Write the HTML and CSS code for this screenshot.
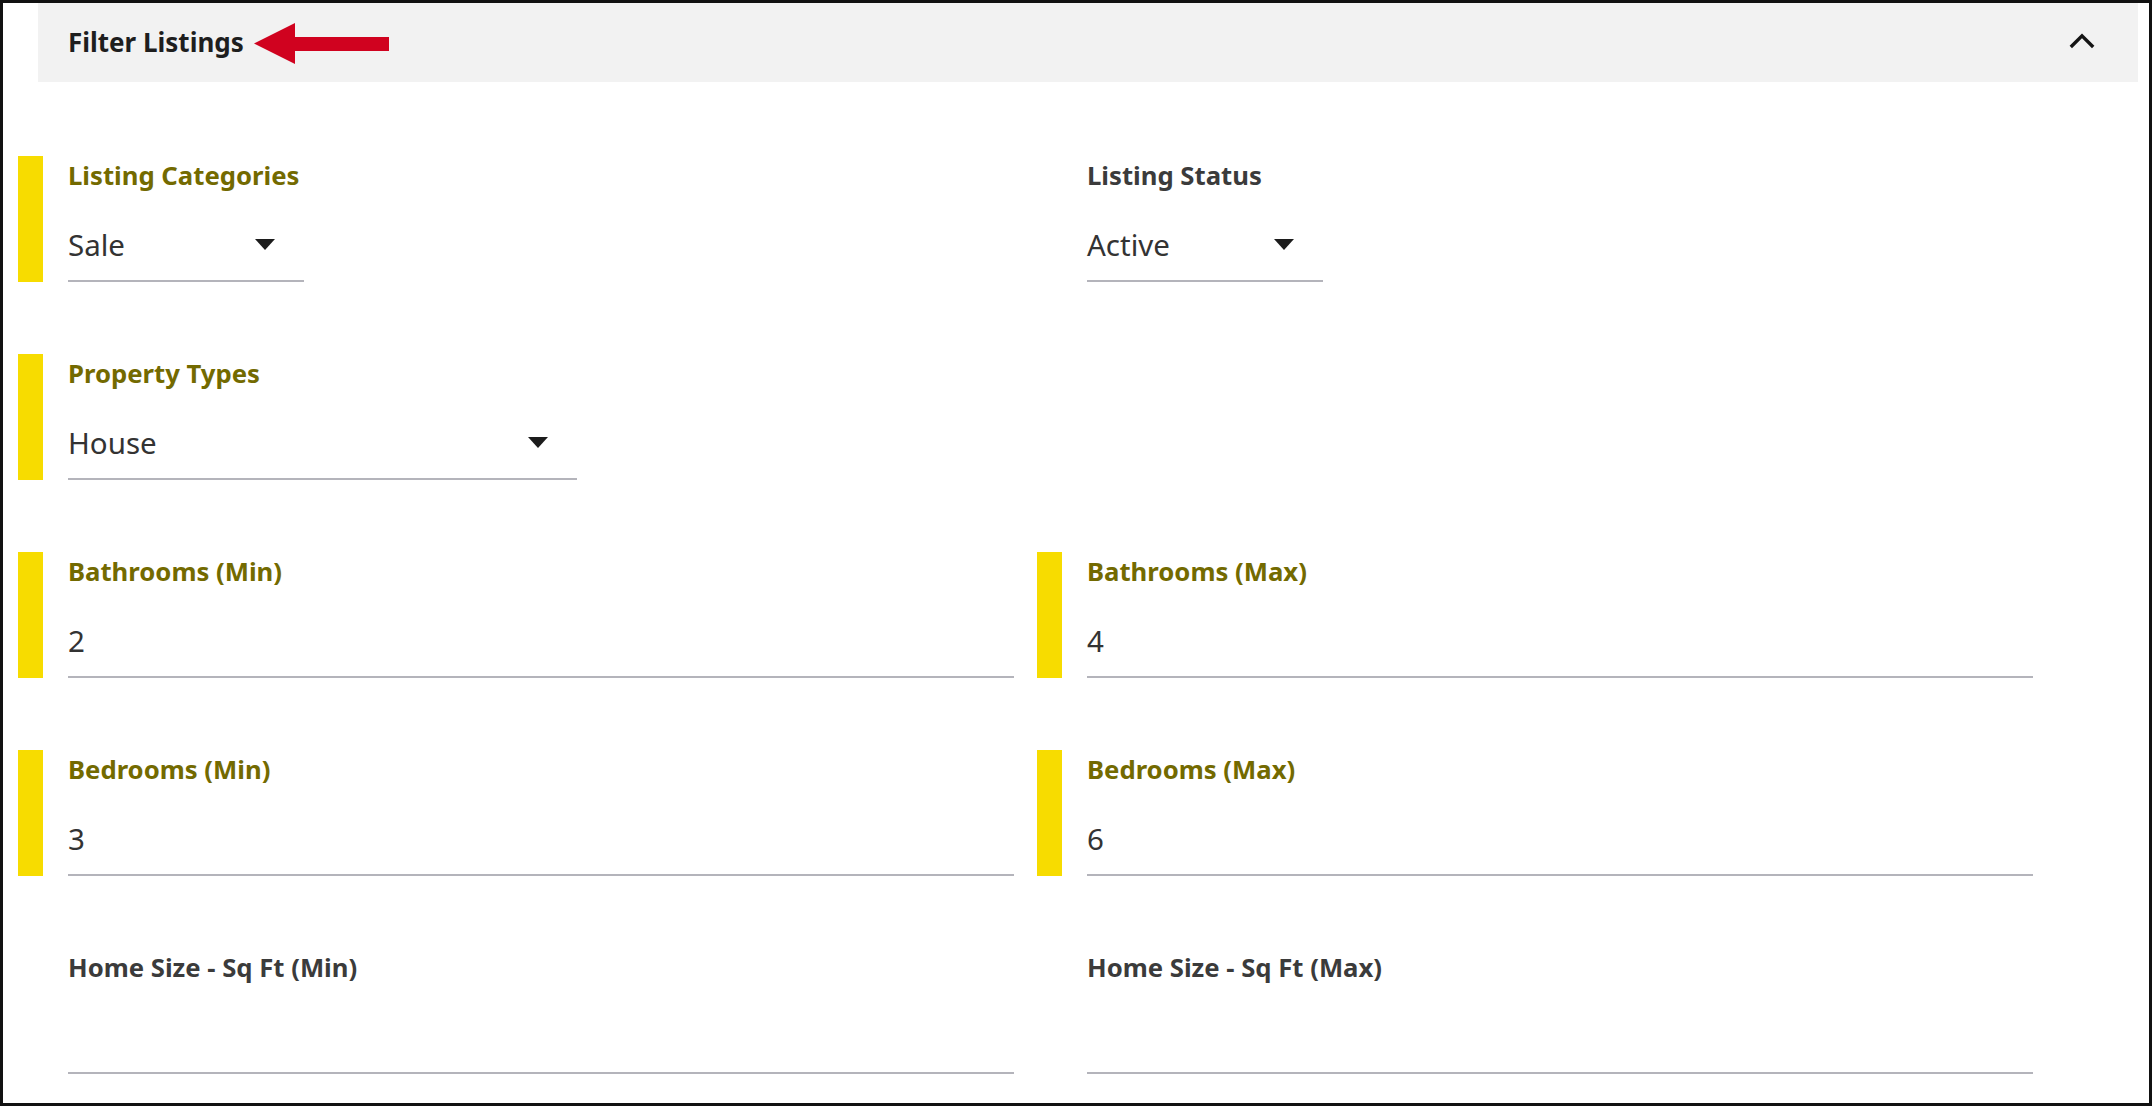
FILE: index.html
```html
<!DOCTYPE html>
<html lang="en">
<head>
<meta charset="utf-8">
<title>Filter Listings</title>
<link rel="stylesheet" href="styles.css">
</head>
<body>
<section class="panel">
  <header class="panel-header">
    <h2 class="panel-title">Filter Listings</h2>
    <svg class="pointer" width="135" height="41" viewBox="0 0 135 41" aria-hidden="true">
      <polygon points="0,20.5 41,0 41,14 135,14 135,28 41,28 41,41" fill="#d0021f"/>
    </svg>
    <button class="toggle" type="button" aria-label="Collapse">
      <svg width="26" height="16" viewBox="0 0 26 16" aria-hidden="true">
        <polyline points="1.8,14 13,2.8 24.2,14" fill="none" stroke="#151515" stroke-width="3.4" stroke-linejoin="miter"/>
      </svg>
    </button>
  </header>

  <div class="filters">
    <div class="field is-set">
      <span class="marker"></span>
      <div class="field-body">
        <div class="field-label">Listing Categories</div>
        <div class="control select select-sm">Sale</div>
      </div>
    </div>
    <div class="field">
      <span class="marker"></span>
      <div class="field-body">
        <div class="field-label">Listing Status</div>
        <div class="control select select-sm">Active</div>
      </div>
    </div>

    <div class="field is-set">
      <span class="marker"></span>
      <div class="field-body">
        <div class="field-label">Property Types</div>
        <div class="control select select-md">House</div>
      </div>
    </div>
    <div class="field empty"></div>

    <div class="field is-set">
      <span class="marker"></span>
      <div class="field-body">
        <div class="field-label">Bathrooms (Min)</div>
        <div class="control">2</div>
      </div>
    </div>
    <div class="field is-set">
      <span class="marker"></span>
      <div class="field-body">
        <div class="field-label">Bathrooms (Max)</div>
        <div class="control">4</div>
      </div>
    </div>

    <div class="field is-set">
      <span class="marker"></span>
      <div class="field-body">
        <div class="field-label">Bedrooms (Min)</div>
        <div class="control">3</div>
      </div>
    </div>
    <div class="field is-set">
      <span class="marker"></span>
      <div class="field-body">
        <div class="field-label">Bedrooms (Max)</div>
        <div class="control">6</div>
      </div>
    </div>

    <div class="field">
      <span class="marker"></span>
      <div class="field-body">
        <div class="field-label">Home Size - Sq Ft (Min)</div>
        <div class="control"></div>
      </div>
    </div>
    <div class="field">
      <span class="marker"></span>
      <div class="field-body">
        <div class="field-label">Home Size - Sq Ft (Max)</div>
        <div class="control"></div>
      </div>
    </div>
  </div>
</section>
</body>
</html>
```

FILE: styles.css
```css
* {
  box-sizing: border-box;
}

html,
body {
  margin: 0;
  padding: 0;
  background: #ffffff;
}

body {
  font-family: "Noto Sans", "Open Sans", "Liberation Sans", sans-serif;
  color: #333333;
}

.panel {
  width: 2152px;
  height: 1106px;
  border: 3px solid #111111;
  background: #ffffff;
}

.panel-header {
  display: flex;
  align-items: center;
  height: 79px;
  margin: 0 11px 0 35px;
  padding: 0 43px 0 30px;
  background: #f2f2f2;
}

.panel-title {
  margin: 0;
  font-size: 26px;
  font-weight: 700;
  line-height: 33px;
  color: #1e1e1e;
}

.pointer {
  display: block;
  margin-left: 10px;
  margin-top: 2px;
}

.toggle {
  display: block;
  margin: 0 0 4px auto;
  padding: 0;
  border: 0;
  background: none;
  line-height: 0;
}

.filters {
  display: grid;
  grid-template-columns: 996px 996px;
  column-gap: 23px;
  row-gap: 72px;
  padding: 74px 0 0 15px;
}

.field {
  display: flex;
  align-items: stretch;
}

.marker {
  flex: none;
  width: 25px;
  margin-right: 25px;
}

.field.is-set .marker {
  background: #f7dc00;
}

.field-body {
  width: 946px;
  padding-top: 2.5px;
}

.field-label {
  margin-bottom: 34px;
  font-size: 25.7px;
  font-weight: 700;
  line-height: 33px;
  color: #3b3b3b;
}

.field.is-set .field-label {
  color: #736a00;
}

.control {
  height: 56.5px;
  padding-bottom: 16.5px;
  border-bottom: 2px solid #b4b4bb;
  font-size: 29.5px;
  font-weight: 400;
  line-height: 38px;
  color: #333333;
}

.select {
  display: flex;
  align-items: flex-start;
  justify-content: space-between;
  padding-right: 29px;
}

.select::after {
  content: "";
  width: 0;
  height: 0;
  margin-top: 13px;
  border-left: 10px solid transparent;
  border-right: 10px solid transparent;
  border-top: 11px solid #1c1c1c;
}

.select-sm {
  width: 236px;
}

.select-md {
  width: 509px;
}
```
